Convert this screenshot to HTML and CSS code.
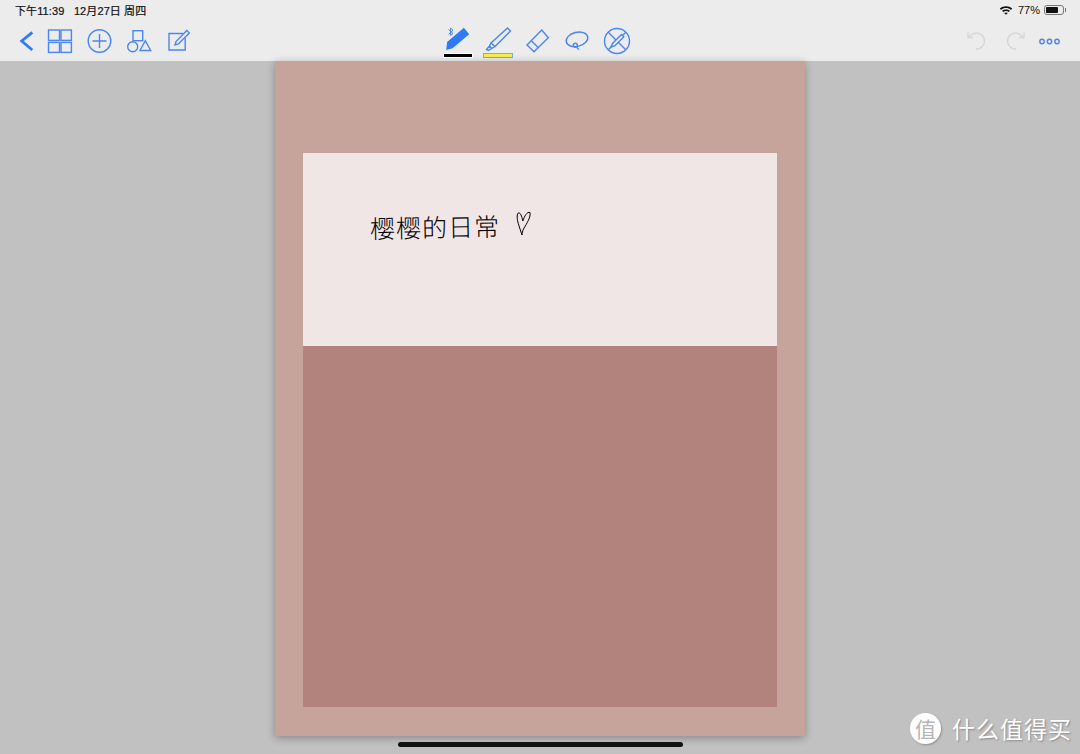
FILE: index.html
```html
<!DOCTYPE html>
<html lang="zh-CN">
<head>
    <meta charset="UTF-8">
    <title>Notes</title>
    <link rel="stylesheet" href="styles.css">
</head>
<body>
    <div class="app">
        <div class="top">
            <div class="status">
                <div class="time">下午11:39&nbsp;&nbsp;&nbsp;12月27日 周四</div>
                <div class="sys">
                    <svg class="wifi" width="14" height="10" viewBox="0 0 14 10">
                        <path d="M0.8 3.6C4.2 0.4 9.8 0.4 13.2 3.6L12 4.9C9.2 2.4 4.8 2.4 2 4.9Z"/>
                        <path d="M3 5.8C5.2 3.9 8.8 3.9 11 5.8L9.8 7C8.2 5.7 5.8 5.7 4.2 7Z"/>
                        <path d="M5.2 8C6.2 7.2 7.8 7.2 8.8 8L7 9.8Z"/>
                    </svg>
                    <span>77%</span>
                    <div class="battery"><div class="battery-fill"></div></div>
                    <div class="battery-nub"></div>
                </div>
            </div>
            <div class="toolbar">
                <div class="left">
                    <svg class="ic back" width="16" height="25" viewBox="0 0 16 25">
                        <path d="M16.3 3.3L5.7 12L16.3 21"/>
                    </svg>
                    <svg class="ic" width="24" height="25" viewBox="0 0 24 25">
                        <rect x="0.5" y="1" width="11" height="10.4"/>
                        <rect x="13" y="1" width="10.4" height="10.4"/>
                        <rect x="0.5" y="13.4" width="11" height="10"/>
                        <rect x="13" y="13.4" width="10.4" height="10"/>
                    </svg>
                    <svg class="ic" width="24" height="25" viewBox="0 0 24 25">
                        <circle cx="11.5" cy="12" r="11.3"/>
                        <path d="M11.5 5V19M4.500 12H18.500"/>
                    </svg>
                    <svg class="ic" width="24" height="25" viewBox="0 0 24 25">
                        <rect x="5" y="1.700" width="9.700" height="10"/>
                        <circle cx="4.700" cy="17.700" r="5"/>
                        <path d="M12 21.500H22.700L17.300 11.700Z"/>
                    </svg>
                    <svg class="ic" width="24" height="25" viewBox="0 0 24 25">
                        <path d="M15 4.500H1V21H17.200V9"/>
                        <path d="M7 16L8 12.500L18.800 1.500L21.300 4L10.400 15Z"/>
                    </svg>
                </div>
                <div class="tools">
                    <div class="tool">
                        <svg class="ic" width="30" height="26" viewBox="0 0 30 26">
                            <path class="solid" d="M4 22L4.800 15.300L20.800 1.800L25.200 7.200L9.200 20.700Z"/>
                            <path class="thin" d="M5.500 2.500L10 6.500L7.600 8.500V1L10 3.200L5.500 7.500"/>
                        </svg>
                        <div class="swatch swatch-black"></div>
                    </div>
                    <div class="tool">
                        <svg class="ic" width="30" height="26" viewBox="0 0 30 26">
                            <path d="M24.500 1L27.500 4L12 19.500L8 16Z"/>
                            <path d="M8 16L6.500 19L8.500 21.500L12 19.500M6.500 19L3.500 22.500L5.500 23.500L8.500 21.500"/>
                        </svg>
                        <div class="swatch swatch-yellow"></div>
                    </div>
                    <div class="tool">
                        <svg class="ic" width="30" height="26" viewBox="0 0 30 26">
                            <path d="M18.700 3L25.300 10.700L11 24.700L4 18Z"/>
                            <path d="M8.700 14L15.300 20.700"/>
                        </svg>
                    </div>
                    <div class="tool">
                        <svg class="ic" width="30" height="26" viewBox="0 0 30 26">
                            <ellipse cx="14" cy="12.300" rx="11" ry="7" transform="rotate(-14 14 12.300)"/>
                            <circle cx="12.300" cy="18.300" r="2"/>
                            <path d="M13.600 20C14.200 21 15 21.800 16 22.500"/>
                        </svg>
                    </div>
                    <div class="tool">
                        <svg class="ic" width="30" height="26" viewBox="0 0 30 26">
                            <circle cx="14" cy="14" r="12.500"/>
                            <path d="M5.500 5.500L22.500 22.500"/>
                            <path d="M22.500 5.500L5.500 22.500"/>
                            <path class="pencil" d="M8 20L9.500 16.500L18.500 7.500L20.800 9.800L12 18.700Z"/>
                        </svg>
                    </div>
                </div>
                <div class="right">
                    <svg class="ic off" width="24" height="25" viewBox="0 0 24 25">
                        <path d="M11 20C16 20 19.500 16.500 19.500 12C19.500 7.500 16 4 11.500 4C8 4 6 6 3.500 8"/>
                        <path d="M3 3.500V8.500H8"/>
                    </svg>
                    <svg class="ic off" width="24" height="25" viewBox="0 0 24 25">
                        <path d="M12 20C7 20 3.500 16.500 3.500 12C3.500 7.500 7 4 11.500 4C15 4 17 6 19.500 8"/>
                        <path d="M20 3.500V8.500H15"/>
                    </svg>
                    <svg class="ic" width="24" height="25" viewBox="0 0 24 25">
                        <circle cx="4" cy="12.500" r="2.200"/>
                        <circle cx="11.500" cy="12.500" r="2.200"/>
                        <circle cx="19" cy="12.500" r="2.200"/>
                    </svg>
                </div>
            </div>
        </div>
        <div class="canvas">
            <div class="page">
                <div class="title-band">
                    <div class="ink">樱樱的日常</div>
                    <svg class="heart" width="15" height="29" viewBox="0 0 15 29">
                        <path d="M6 26C3.500 18 0 10 1.500 5C3 2 5.500 5 6.800 12C8.500 7 11 2.500 14 3.500C15 8 11 14 7.500 20C6.500 22 6.200 24 6 26Z"/>
                    </svg>
                </div>
                <div class="body-band"></div>
            </div>
        </div>
        <div class="watermark">
            <div class="logo">值</div>
            <div class="brand">什么值得买</div>
        </div>
        <div class="home-bar"></div>
    </div>
</body>
</html>
```
FILE: styles.css
```css
*{
    margin: 0;
    padding: 0;
    box-sizing: border-box;
}
body{
    font-family: "Liberation Sans", "Noto Sans CJK SC", sans-serif;
    background: #c1c1c1;
    overflow: hidden;
}
.app{
    position: relative;
    width: 1080px;
    height: 754px;
    display: flex;
    flex-direction: column;
}
.top{
    height: 61px;
    background: #ececec;
    flex-shrink: 0;
}
.status{
    height: 22px;
    padding: 0 14px 2px 15px;
    display: flex;
    justify-content: space-between;
    align-items: center;
    font-size: 11px;
    color: #111;
}
.time{
    letter-spacing: 0.1px;
    -webkit-text-stroke: 0.2px #111;
}
.sys{
    display: flex;
    align-items: center;
}
.sys span{
    margin: 0 4px 0 5px;
}
.wifi{
    fill: #111;
}
.battery{
    width: 20px;
    height: 10px;
    padding: 1px;
    border: 1px solid #777;
    border-radius: 3px;
}
.battery-fill{
    width: 76%;
    height: 100%;
    background: #111;
    border-radius: 1px;
}
.battery-nub{
    width: 1px;
    height: 4px;
    margin-left: 1px;
    background: #777;
}
.toolbar{
    height: 39px;
    display: grid;
    grid-template-columns: 1fr auto 1fr;
}
.left{
    padding-left: 16px;
    display: flex;
    align-items: center;
    gap: 16px;
}
.right{
    padding-right: 18px;
    display: flex;
    justify-content: flex-end;
    align-items: center;
    gap: 15px;
}
.right .ic:last-child{
    margin-left: -5px;
}
.ic{
    display: block;
    overflow: visible;
    fill: none;
    stroke: #4a86ee;
    stroke-width: 1.4;
}
.back{
    stroke: #2f7bf6;
    stroke-width: 2.8;
}
.off{
    stroke: #d6d6d6;
}
.solid{
    fill: #2f7bf6;
    stroke: #2f7bf6;
}
.thin{
    stroke-width: 1;
}
.pencil{
    fill: #ececec;
}
.tools{
    display: flex;
    gap: 10px;
    padding: 5px 4px 0 0;
}
.tool{
    width: 30px;
}
.swatch{
    height: 5px;
    border: 1px solid #fff;
}
.swatch-black{
    background: #000;
}
.swatch-yellow{
    background: #f5ee50;
    border-color: #7fa6ea;
}
.canvas{
    flex: 1;
    display: flex;
    justify-content: center;
    align-items: flex-start;
}
.page{
    width: 530px;
    height: 675px;
    padding: 92px 28px 29px;
    background: #c7a49b;
    box-shadow: 0 2px 8px rgba(0, 0, 0, 0.3);
    display: flex;
    flex-direction: column;
}
.title-band{
    height: 193px;
    padding: 55px 0 0 67px;
    background: #f1e6e6;
    display: flex;
    align-items: flex-start;
    gap: 16px;
}
.ink{
    font-family: "Noto Sans CJK SC", sans-serif;
    font-size: 25px;
    font-weight: 300;
    line-height: 36px;
    letter-spacing: 1px;
    color: #000;
    transform: rotate(-1deg);
}
.heart{
    margin-top: 1px;
    fill: none;
    stroke: #000;
    stroke-width: 1;
}
.body-band{
    flex: 1;
    background: #b2827c;
}
.watermark{
    position: absolute;
    left: 910px;
    top: 713px;
    display: flex;
    align-items: center;
    gap: 11px;
    color: #fff;
}
.logo{
    width: 31px;
    height: 31px;
    border-radius: 50%;
    background: #fff;
    color: #b5b5b5;
    font-family: "Noto Sans CJK SC", sans-serif;
    font-size: 21px;
    line-height: 31px;
    text-align: center;
    box-shadow: 1px 1px 2px rgba(0, 0, 0, 0.25);
}
.brand{
    font-family: "Noto Sans CJK SC", sans-serif;
    font-size: 23px;
    line-height: 31px;
    letter-spacing: 1px;
    text-shadow: 1px 1px 2px rgba(0, 0, 0, 0.3);
}
.home-bar{
    position: absolute;
    left: 398px;
    top: 742px;
    width: 285px;
    height: 5px;
    background: #111;
    border-radius: 3px;
}
```
